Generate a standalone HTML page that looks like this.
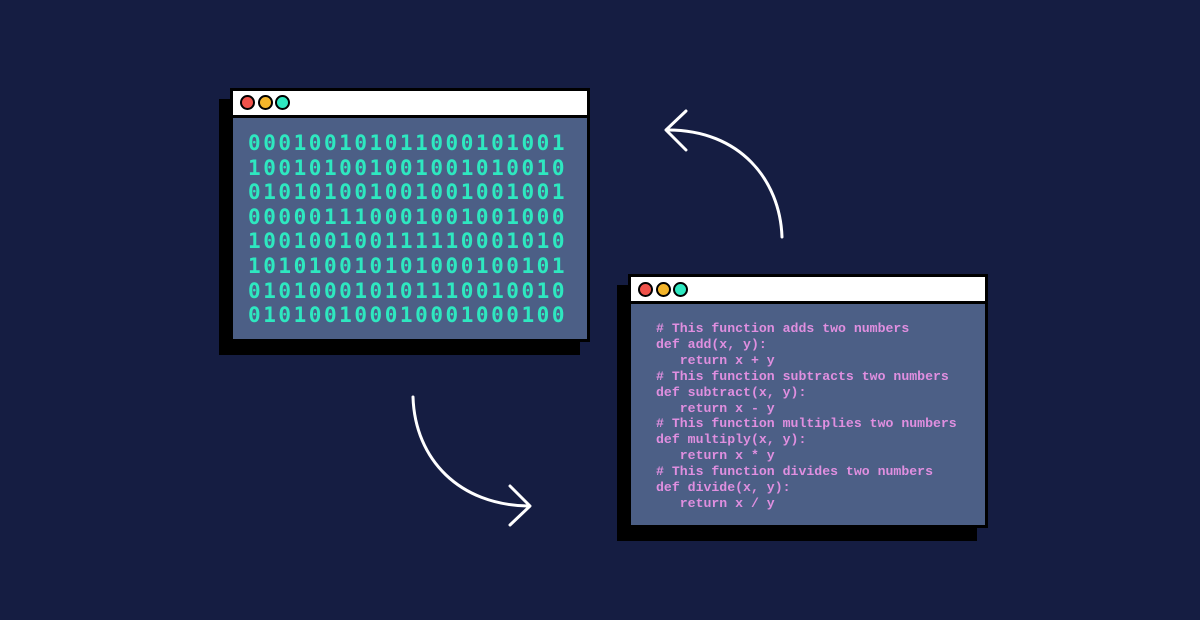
<!DOCTYPE html>
<html><head><style>
html,body{margin:0;padding:0;}
body{width:1200px;height:620px;background:#151d42;position:relative;overflow:hidden;}
.sh{position:absolute;background:#000;}
.win{position:absolute;background:#000;box-sizing:border-box;}
.tb{position:absolute;background:#fff;}
.ct{position:absolute;background:#4c5f86;}
.dot{position:absolute;width:11px;height:11px;border:2.5px solid #000;border-radius:50%;}
.bin{position:absolute;left:248px;top:131px;font-family:"DejaVu Sans Mono","Liberation Mono",monospace;font-weight:bold;font-size:21px;letter-spacing:2.55px;line-height:24.6px;color:#2ee8c0;white-space:pre;}
.code{position:absolute;left:656px;top:321px;font-family:"Liberation Mono",monospace;font-weight:bold;font-size:13.2px;line-height:15.9px;color:#e08fe0;white-space:pre;}
</style></head><body>
<div class="sh" style="left:219px;top:99px;width:361px;height:256px"></div>
<div class="win" style="left:230px;top:88px;width:360px;height:254px"></div>
<div class="tb" style="left:233px;top:91px;width:354px;height:24px"></div>
<div class="ct" style="left:233px;top:118px;width:354px;height:221px"></div>
<div class="dot" style="left:240px;top:95px;background:#f0524a"></div>
<div class="dot" style="left:258px;top:95px;background:#f4b52a"></div>
<div class="dot" style="left:275px;top:95px;background:#2ee8c0"></div>
<div class="bin">000100101011000101001
100101001001001010010
010101001001001001001
000001110001001001000
100100100111110001010
101010010101000100101
010100010101110010010
010100100010001000100</div>

<div class="sh" style="left:617px;top:285px;width:360px;height:256px"></div>
<div class="win" style="left:628px;top:274px;width:360px;height:254px"></div>
<div class="tb" style="left:631px;top:277px;width:354px;height:24px"></div>
<div class="ct" style="left:631px;top:304px;width:354px;height:221px"></div>
<div class="dot" style="left:638px;top:282px;background:#f0524a"></div>
<div class="dot" style="left:656px;top:282px;background:#f4b52a"></div>
<div class="dot" style="left:673px;top:282px;background:#2ee8c0"></div>
<div class="code"># This function adds two numbers
def add(x, y):
   return x + y
# This function subtracts two numbers
def subtract(x, y):
   return x - y
# This function multiplies two numbers
def multiply(x, y):
   return x * y
# This function divides two numbers
def divide(x, y):
   return x / y</div>

<svg width="1200" height="620" style="position:absolute;left:0;top:0" fill="none" stroke="#fff" stroke-width="3" stroke-linecap="round" stroke-linejoin="round">
<path d="M782 237 C780 180 740 130 668 130"/>
<path d="M686 111 L666 130 L686 150"/>
<path d="M413 397 C415 460 460 505 528 506"/>
<path d="M510 486 L530 506 L510 525"/>
</svg>
</body></html>
